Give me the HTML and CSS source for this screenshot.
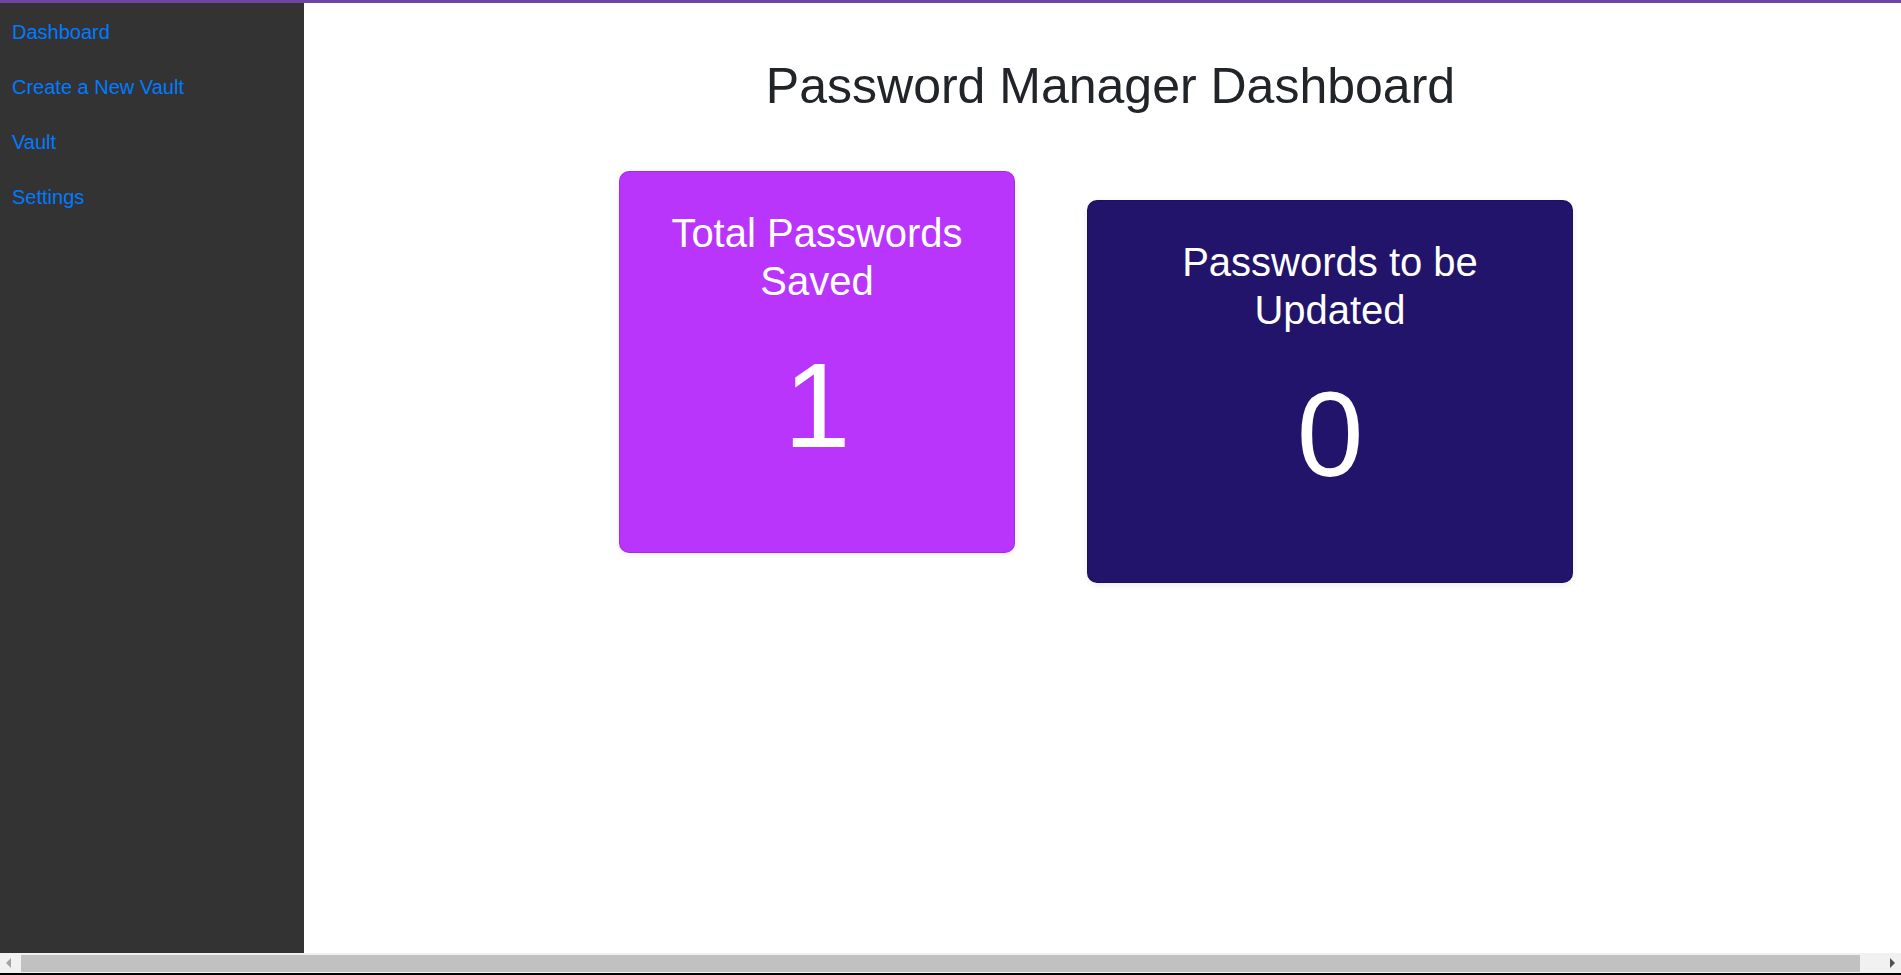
FILE: index.html
```html
<!DOCTYPE html>
<html lang="en">
<head>
<meta charset="utf-8">
<title>Password Manager Dashboard</title>
<link rel="stylesheet" href="styles.css">
</head>
<body>
<div class="topbar"></div>
<div class="layout">
  <nav class="sidebar">
    <a class="nav-link" href="#">Dashboard</a>
    <a class="nav-link" href="#">Create a New Vault</a>
    <a class="nav-link" href="#">Vault</a>
    <a class="nav-link" href="#">Settings</a>
  </nav>
  <main class="main">
    <h1 class="title">Password Manager Dashboard</h1>
    <div class="cards">
      <div class="card card-total">
        <h2 class="card-title">Total Passwords Saved</h2>
        <div class="count">1</div>
      </div>
      <div class="card card-update">
        <h2 class="card-title">Passwords to be Updated</h2>
        <div class="count">0</div>
      </div>
    </div>
  </main>
</div>
<div class="hscroll">
  <div class="sb-btn"><span class="tri tri-left"></span></div>
  <div class="sb-track"><div class="sb-thumb"></div></div>
  <div class="sb-btn"><span class="tri tri-right"></span></div>
</div>
<div class="frame-bottom"></div>
</body>
</html>
```

FILE: styles.css
```css
html, body {
  margin: 0;
  padding: 0;
  height: 100%;
}
body {
  display: flex;
  flex-direction: column;
  height: 975px;
  overflow: hidden;
  font-family: "Liberation Sans", Arial, sans-serif;
  background: #ffffff;
}
.topbar {
  height: 3px;
  flex: 0 0 3px;
  background: #6e45a5;
}
.layout {
  flex: 1 1 auto;
  display: flex;
  min-height: 0;
}
.sidebar {
  width: 304px;
  flex: 0 0 304px;
  background: #333333;
  display: flex;
  flex-direction: column;
  padding-top: 1px;
}
.nav-link {
  display: block;
  padding: 12.5px 12px;
  font-size: 20px;
  line-height: 30px;
  color: #007bff;
  text-decoration: none;
}
.main {
  flex: 1 1 auto;
  padding: 53px 0 0 0;
  display: flex;
  flex-direction: column;
  align-items: center;
}
.title {
  margin: 0 0 0 16px;
  font-size: 50px;
  line-height: 60px;
  font-weight: normal;
  color: #212529;
  text-align: center;
}
.cards {
  margin: 55px 13px 0 0;
  display: flex;
  align-items: flex-start;
  gap: 72px;
}
.card {
  box-sizing: border-box;
  border-radius: 10px;
  border: 1px solid rgba(0, 0, 0, 0.12);
  box-shadow: 0 2px 6px rgba(0, 0, 0, 0.08);
  color: #ffffff;
  text-align: center;
  padding: 37px 20px 0;
}
.card-total {
  width: 396px;
  height: 382px;
  background: #b935fc;
}
.card-update {
  width: 486px;
  height: 383px;
  margin-top: 29px;
  background: #22146a;
}
.card-title {
  margin: 0 0 28px;
  font-size: 40px;
  line-height: 48px;
  font-weight: normal;
}
.count {
  font-size: 120px;
  line-height: 144px;
}
.hscroll {
  flex: 0 0 20px;
  height: 20px;
  display: flex;
  background: #f1f1f1;
}
.sb-btn {
  width: 17px;
  flex: 0 0 17px;
  display: flex;
  align-items: center;
  justify-content: center;
}
.tri {
  width: 0;
  height: 0;
  border-top: 5px solid transparent;
  border-bottom: 5px solid transparent;
}
.tri-left {
  border-right: 5px solid #a3a3a3;
}
.tri-right {
  border-left: 5px solid #505050;
}
.sb-track {
  flex: 1 1 auto;
  padding: 2px 24px 1px 4px;
  display: flex;
}
.sb-thumb {
  flex: 1 1 auto;
  background: #c1c1c1;
}
.frame-bottom {
  flex: 0 0 2px;
  height: 2px;
  background: #000000;
}
```
